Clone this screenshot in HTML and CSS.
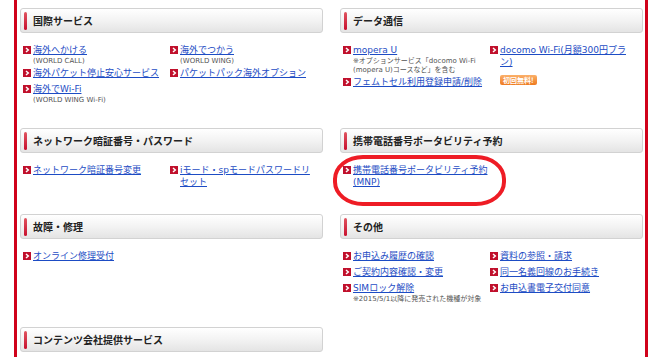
FILE: index.html
```html
<!DOCTYPE html>
<html lang="ja">
<head>
  <meta charset="UTF-8">
  <title>お手続き</title>
  <link rel="stylesheet" href="styles.css">
</head>
<body>

<svg width="0" height="0" class="defs">
  <symbol id="arr" viewBox="0 0 8 8">
    <rect width="8" height="8" fill="#c0102c"/>
    <path d="M3 2 L5.3 4 L3 6" stroke="#fff" stroke-width="1.5" fill="none"/>
  </symbol>
</svg>

<div class="wrap">
  <div class="grid">

    <div class="sec">
      <h2 class="hd">国際サービス</h2>
      <div class="list">
        <ul class="col">
          <li><svg class="ic"><use href="#arr"/></svg><div class="t"><a href="#">海外へかける</a><p class="sub">(WORLD CALL)</p></div></li>
          <li><svg class="ic"><use href="#arr"/></svg><div class="t"><a href="#">海外パケット停止安心サービス</a></div></li>
          <li><svg class="ic"><use href="#arr"/></svg><div class="t"><a href="#">海外でWi-Fi</a><p class="sub">(WORLD WING Wi-Fi)</p></div></li>
        </ul>
        <ul class="col">
          <li><svg class="ic"><use href="#arr"/></svg><div class="t"><a href="#">海外でつかう</a><p class="sub">(WORLD WING)</p></div></li>
          <li><svg class="ic"><use href="#arr"/></svg><div class="t"><a href="#">パケットパック海外オプション</a></div></li>
        </ul>
      </div>
    </div>

    <div class="sec">
      <h2 class="hd">データ通信</h2>
      <div class="list">
        <ul class="col">
          <li><svg class="ic"><use href="#arr"/></svg><div class="t"><a href="#">mopera U</a><p class="sub note">※オプションサービス「docomo Wi-Fi<br>(mopera U)コースなど」を含む</p></div></li>
          <li><svg class="ic"><use href="#arr"/></svg><div class="t"><a href="#">フェムトセル利用登録申請/削除</a></div></li>
        </ul>
        <ul class="col">
          <li><svg class="ic"><use href="#arr"/></svg><div class="t"><a href="#">docomo Wi-Fi(月額300円プラ<br>ン)</a><span class="badge">初回無料!</span></div></li>
        </ul>
      </div>
    </div>

    <div class="sec">
      <h2 class="hd">ネットワーク暗証番号・パスワード</h2>
      <div class="list">
        <ul class="col">
          <li><svg class="ic"><use href="#arr"/></svg><div class="t"><a href="#">ネットワーク暗証番号変更</a></div></li>
        </ul>
        <ul class="col">
          <li><svg class="ic"><use href="#arr"/></svg><div class="t"><a href="#">iモード・spモードパスワードリ<br>セット</a></div></li>
        </ul>
      </div>
    </div>

    <div class="sec mark">
      <h2 class="hd">携帯電話番号ポータビリティ予約</h2>
      <div class="list">
        <ul class="col">
          <li><svg class="ic"><use href="#arr"/></svg><div class="t"><a href="#">携帯電話番号ポータビリティ予約<br>(MNP)</a></div></li>
        </ul>
      </div>
      <div class="circle"></div>
    </div>

    <div class="sec">
      <h2 class="hd">故障・修理</h2>
      <div class="list">
        <ul class="col">
          <li><svg class="ic"><use href="#arr"/></svg><div class="t"><a href="#">オンライン修理受付</a></div></li>
        </ul>
      </div>
    </div>

    <div class="sec">
      <h2 class="hd">その他</h2>
      <div class="list">
        <ul class="col">
          <li><svg class="ic"><use href="#arr"/></svg><div class="t"><a href="#">お申込み履歴の確認</a></div></li>
          <li><svg class="ic"><use href="#arr"/></svg><div class="t"><a href="#">ご契約内容確認・変更</a></div></li>
          <li><svg class="ic"><use href="#arr"/></svg><div class="t"><a href="#">SIMロック解除</a><p class="sub note">※2015/5/1以降に発売された機種が対象</p></div></li>
        </ul>
        <ul class="col">
          <li><svg class="ic"><use href="#arr"/></svg><div class="t"><a href="#">資料の参照・請求</a></div></li>
          <li><svg class="ic"><use href="#arr"/></svg><div class="t"><a href="#">同一名義回線のお手続き</a></div></li>
          <li><svg class="ic"><use href="#arr"/></svg><div class="t"><a href="#">お申込書電子交付同意</a></div></li>
        </ul>
      </div>
    </div>

    <div class="sec">
      <h2 class="hd">コンテンツ会社提供サービス</h2>
    </div>

  </div>
</div>

</body>
</html>
```

FILE: styles.css
```css
body {
  margin: 0;
  background-color: #fff;
  font-family: "DejaVu Sans", "Noto Sans CJK JP", sans-serif;
  overflow: hidden;
}

.defs {
  position: absolute;
}

.wrap {
  margin-left: 14px;
  width: 623px;
  height: 349px;
  border-left: 3px solid #d0021b;
  border-right: 3px solid #d0021b;
  padding: 8px 2px 0 3px;
}

.grid {
  display: grid;
  grid-template-columns: 1fr 1fr;
  column-gap: 17px;
  row-gap: 26px;
}

.sec {
  position: relative;
}

/* 見出し */
.hd {
  position: relative;
  margin: 0;
  height: 23px;
  line-height: 23px;
  padding-left: 12px;
  border: 1px solid #d2d2d2;
  border-radius: 3px;
  background: linear-gradient(#ffffff, #f3f3f3 50%, #e4e4e4);
  font-family: "Noto Sans CJK JP", sans-serif;
  font-size: 10px;
  font-weight: bold;
  color: #222;
}

.hd::before {
  content: "";
  position: absolute;
  left: 3px;
  top: 3px;
  width: 3px;
  height: 18px;
  border-radius: 2px;
  background: linear-gradient(#e05560, #c8102e);
}

.list {
  display: flex;
  margin-top: 11px;
  padding-left: 3px;
}

.col {
  list-style: none;
  margin: 0;
  padding: 0;
}

.col:first-child {
  width: 147px;
  flex: none;
}

.col li {
  display: flex;
  gap: 2px;
  margin-bottom: 4px;
}

.col li:last-child {
  margin-bottom: 0;
}

.ic {
  flex: none;
  width: 8px;
  height: 8px;
  margin-top: 2px;
}

.t a {
  display: block;
  font-size: 9px;
  line-height: 12px;
  color: #1d4cc4;
  text-decoration: underline;
  white-space: nowrap;
}

.sub {
  margin: 1px 0 -3px;
  font-size: 7px;
  line-height: 9px;
  color: #555;
  white-space: nowrap;
}

.note {
  font-size: 7px;
}

.badge {
  display: inline-block;
  margin-top: 5px;
  padding: 0 3px;
  height: 10px;
  line-height: 10px;
  border-radius: 2px;
  background: linear-gradient(#fbb06a, #ee7a1f);
  color: #fff;
  font-family: "Noto Sans CJK JP", sans-serif;
  font-size: 7px;
  font-weight: bold;
}

/* 赤丸 */
.circle {
  position: absolute;
  left: -7px;
  top: 27px;
  width: 165px;
  height: 43px;
  border: 4px solid #ee1c25;
  border-radius: 30px / 24px;
}
```
